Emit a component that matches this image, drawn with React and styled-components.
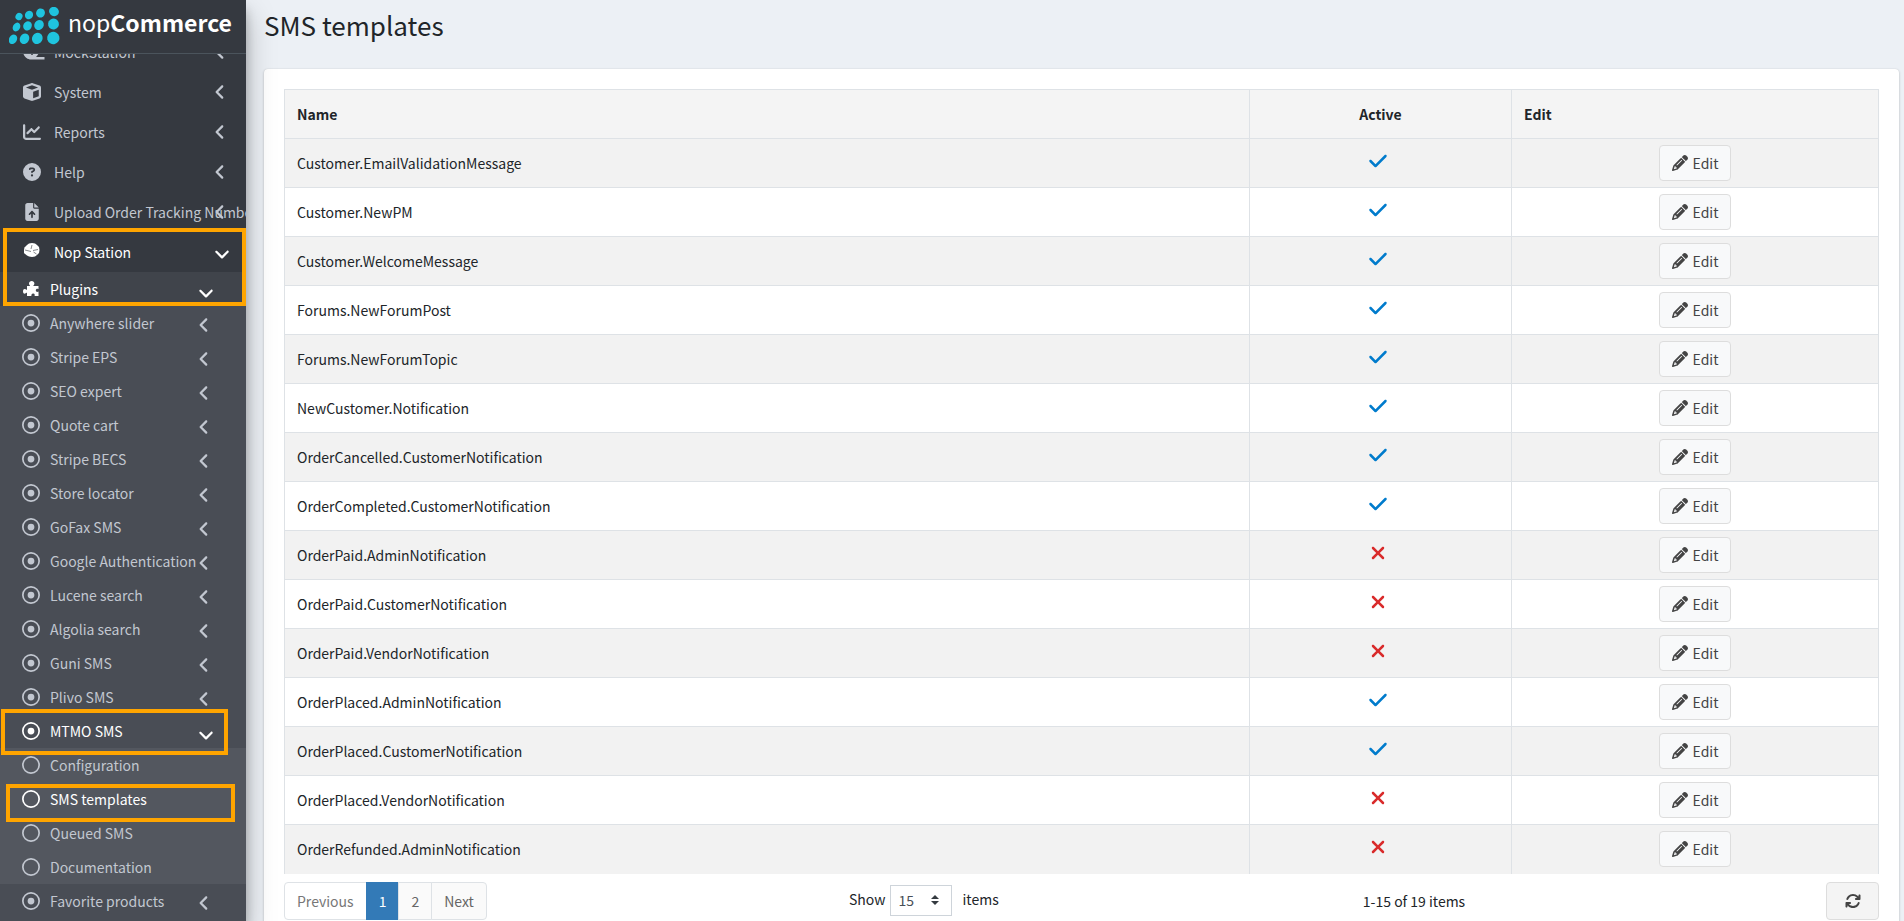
import React from "react";
import styled, { createGlobalStyle } from "styled-components";
import {
  FaAngleDown,
  FaAngleLeft,
  FaArrowsRotate,
  FaChartLine,
  FaCheck,
  FaCircleQuestion,
  FaCube,
  FaFileArrowUp,
  FaPencil,
  FaRegCircle,
  FaRegCircleDot,
  FaXmark,
} from "react-icons/fa6";

const GlobalStyle = createGlobalStyle`
  *, *::before, *::after {
    box-sizing: border-box;
  }

  body {
    margin: 0;
    color: #212529;
    background-color: #ecf0f5;
    font-family: "Noto Sans CJK SC", "Noto Sans", sans-serif;
    font-size: 14px;
    line-height: 24px;
  }

  button, select {
    font: inherit;
  }
`;

const Shell = styled.div`
  display: flex;
  height: 100vh;
  overflow: hidden;
`;

// Sidebar
const Sidebar = styled.aside`
  display: flex;
  flex-direction: column;
  flex: 0 0 246px;
  min-width: 0;
  color: #c2c7d0;
  background-color: #353940;
  box-shadow: 0 14px 28px rgba(0, 0, 0, 0.25), 0 10px 10px rgba(0, 0, 0, 0.22);
  z-index: 1;
`;

const Brand = styled.a`
  display: flex;
  align-items: center;
  flex: 0 0 54px;
  padding: 2px 9px 0;
  border-bottom: 1px solid #4b545c;
`;

const MenuViewport = styled.nav`
  flex: 1;
  min-height: 0;
  overflow: hidden;
`;

// The menu is scrolled a little, so the first entry is half hidden
const Menu = styled.ul`
  margin: -22px 0 0;
  padding: 0;
  list-style: none;
`;

const SubMenu = styled.ul`
  margin: 0;
  padding: 0 0 ${(props) => props.$tail || 0}px;
  list-style: none;
  background-color: ${(props) => props.$shade};
`;

const MenuEntry = styled.li`
  position: relative;
`;

const MenuLink = styled.a`
  display: flex;
  align-items: center;
  height: ${(props) => (props.$sub ? 34 : 40)}px;
  padding: ${(props) => (props.$sub ? "0 33px 0 22px" : "0 17px 0 23px")};
  color: ${(props) => (props.$active ? "#fff" : "#c2c7d0")};
  text-decoration: none;
  white-space: nowrap;
`;

const MenuIcon = styled.span`
  display: flex;
  justify-content: center;
  flex: 0 0 18px;
  margin-right: ${(props) => (props.$sub ? 10 : 13)}px;

  svg {
    width: ${(props) => props.$size || 18}px;
    height: ${(props) => props.$size || 18}px;
    overflow: visible;
  }
`;

const MenuText = styled.span`
  flex: 1;
  min-width: 0;
`;

const Arrow = styled.span`
  display: flex;
  justify-content: center;
  flex: 0 0 14px;
  padding-top: ${(props) => (props.$sub ? 4 : 0) + (props.$down ? 4 : 0)}px;
  margin-right: ${(props) => (props.$down ? -2 : 0)}px;
  font-size: 18px;

  svg {
    flex: none;
  }
`;

const Highlight = styled.span`
  position: absolute;
  top: ${(props) => props.$top}px;
  left: ${(props) => props.$left}px;
  width: ${(props) => props.$width}px;
  height: ${(props) => props.$height}px;
  border: 4px solid #ffa500;
  pointer-events: none;
  z-index: 1;
`;

// Main area
const Main = styled.main`
  flex: 1;
  min-width: 0;
  padding: 0 5px 0 18px;
`;

const Title = styled.h1`
  margin: 0;
  padding: 7px 0 26px;
  font-size: 26px;
  font-weight: 400;
  line-height: 36px;
`;

const Card = styled.section`
  padding: 20px;
  background-color: #fff;
  border-radius: 4px;
  box-shadow: 0 0 1px rgba(0, 0, 0, 0.125), 0 1px 3px rgba(0, 0, 0, 0.2);
`;

const Table = styled.table`
  width: 100%;
  border-collapse: collapse;
  table-layout: fixed;
`;

const HeadCell = styled.th`
  height: 49px;
  padding: 0 12px;
  border: 1px solid #dee2e6;
  background-color: #f4f4f4;
  font-weight: 700;
  text-align: ${(props) => props.$align || "left"};
`;

const Row = styled.tr`
  background-color: ${(props) => (props.$striped ? "#f2f2f2" : "#fff")};

  &:last-child td {
    border-bottom: 0;
  }
`;

const Cell = styled.td`
  height: 49px;
  padding: 0 12px;
  border: 1px solid #dee2e6;
  text-align: ${(props) => props.$align || "left"};
`;

const Status = styled.span`
  display: flex;
  justify-content: center;
  padding: 0 6px 4px 0;
  color: ${(props) => (props.$on ? "#007bcc" : "#d92b2b")};
  font-size: 20px;
`;

const EditButton = styled.button`
  display: inline-flex;
  align-items: center;
  gap: 5px;
  height: 36px;
  padding: 0 12px;
  color: #444;
  background-color: #f8f9fa;
  border: 1px solid #ddd;
  border-radius: 4px;
  vertical-align: middle;

  svg {
    font-size: 16px;
  }
`;

const Footer = styled.div`
  display: grid;
  grid-template-columns: 113fr 83fr 60fr 63fr;
  align-items: start;
  padding-top: 8px;
`;

const Pagination = styled.ul`
  display: flex;
  margin: 0;
  padding: 0;
  list-style: none;
`;

const PageButton = styled.button`
  height: 38px;
  padding: 0 12px;
  margin-left: -1px;
  color: ${(props) => (props.$current ? "#fff" : "#666")};
  background-color: ${(props) => (props.$current ? "#337ab7" : "#fafafa")};
  border: 1px solid ${(props) => (props.$current ? "#337ab7" : "#dee2e6")};

  li:first-child & {
    margin-left: 0;
    border-radius: 4px 0 0 4px;
  }

  li:last-child & {
    border-radius: 0 4px 4px 0;
  }

  &:disabled {
    color: #777;
    background-color: #fff;
  }
`;

const PageSize = styled.label`
  display: flex;
  align-items: flex-start;
  padding-top: 3px;
  line-height: 28px;
`;

const SizeSelect = styled.select`
  width: 62px;
  height: 31px;
  margin: 0 11px 0 4px;
  padding: 0 8px;
  color: #495057;
  border: 1px solid #ced4da;
  border-radius: 0;
  appearance: none;
  background: #fff
    url("data:image/svg+xml,%3Csvg xmlns='http://www.w3.org/2000/svg' viewBox='0 0 4 5'%3E%3Cpath fill='%23343a40' d='M2 0L0 2h4zm0 5L0 3h4z'/%3E%3C/svg%3E")
    no-repeat right 12px center / 8px 10px;
`;

const Summary = styled.div`
  padding-top: 7px;
  text-align: center;
`;

const RefreshButton = styled.button`
  display: flex;
  align-items: center;
  justify-content: center;
  justify-self: end;
  width: 53px;
  height: 38px;
  color: #444;
  background-color: #f4f4f4;
  border: 1px solid #ddd;
  border-radius: 4px;
  font-size: 16px;
`;

const logoDots = [
  [10, 9.5, 3.4, 3.8], [20, 8, 4, 4.4], [31.5, 6, 4.3, 4.7], [45, 4.5, 5, 4.6],
  [7.5, 20, 3.6, 4.6], [18.5, 18.8, 4.2, 4.8], [30, 18, 4.7, 5.2], [44.5, 17, 5.4, 5.4],
  [4, 32.3, 3.9, 5], [15.5, 31.8, 4.6, 5.4], [28.3, 31.4, 5.2, 5.8], [44.3, 31, 6.2, 6.2],
];

const Logo = () => (
  <svg width="228" height="42" viewBox="0 0 228 42" role="img" aria-label="nopCommerce">
    <g fill="#1fc4df">
      {logoDots.map(([cx, cy, rx, ry]) => (
        <ellipse key={`${cx}-${cy}`} cx={cx} cy={cy} rx={rx} ry={ry} transform={`rotate(30 ${cx} ${cy})`} />
      ))}
    </g>
    <text x="59" y="25" fill="#fff" fontFamily="Noto Sans CJK SC, Noto Sans, sans-serif" fontSize="23">
      nop
      <tspan fontWeight="700">Commerce</tspan>
    </text>
  </svg>
);

const MockIcon = () => (
  <svg viewBox="0 0 18 18" fill="currentColor" aria-hidden="true">
    <path d="M0 8a8 7 0 0 1 16 0c0 2-1 4-3 6h8.500v2.500H8C4 16.500 0 13 0 8z" />
    <circle cx="9" cy="11" r="1" fill="#353940" />
  </svg>
);

// Round mark of the plugin vendor
const StationIcon = () => (
  <svg viewBox="0 0 16 16" fill="currentColor" aria-hidden="true">
    <path d="M8 -1l3 .5 2 1.500 2 2 .5 3-.5 3-2 2-2 1.500-3 .5-3-.5-2-1-2.500-2L0 9 0 6l.5-2.500L3 1l2-1.500z" />
    <path d="M1 6l6 1.500M9 6.500l5-1M7 5l1-4M9.500 8l3 2" stroke="#353940" strokeWidth="0.6" fill="none" />
  </svg>
);

const PuzzleIcon = () => (
  <svg viewBox="0 0 16 16" fill="currentColor" aria-hidden="true">
    <path d="M4 5h3.200C6.500 4 6 3.300 6 2.500 6 1 7.200 0 8.700 0s2.700 1 2.700 2.500c0 .8-.5 1.500-1.200 2.500H15.500v3c-1-.7-2.700-.5-2.700 1.300s1.700 2 2.700 1.300V15h-4c.6-1 .3-2.500-1.300-2.500S8 14 8.500 15H4v-3.500c-1 .7-1.700 1.200-2.500 1.200C.5 12.700 0 11.500 0 10.300s.5-2.300 1.500-2.300c.8 0 1.500.4 2.500 1z" />
  </svg>
);

const topItems = [
  { text: "MockStation", icon: <MockIcon /> },
  { text: "System", icon: <FaCube /> },
  { text: "Reports", icon: <FaChartLine /> },
  { text: "Help", icon: <FaCircleQuestion /> },
  { text: "Upload Order Tracking Numbers", icon: <FaFileArrowUp /> },
];

const plugins = [
  "Anywhere slider",
  "Stripe EPS",
  "SEO expert",
  "Quote cart",
  "Stripe BECS",
  "Store locator",
  "GoFax SMS",
  "Google Authentication",
  "Lucene search",
  "Algolia search",
  "Guni SMS",
  "Plivo SMS",
];

const templates = [
  ["Customer.EmailValidationMessage", true],
  ["Customer.NewPM", true],
  ["Customer.WelcomeMessage", true],
  ["Forums.NewForumPost", true],
  ["Forums.NewForumTopic", true],
  ["NewCustomer.Notification", true],
  ["OrderCancelled.CustomerNotification", true],
  ["OrderCompleted.CustomerNotification", true],
  ["OrderPaid.AdminNotification", false],
  ["OrderPaid.CustomerNotification", false],
  ["OrderPaid.VendorNotification", false],
  ["OrderPlaced.AdminNotification", true],
  ["OrderPlaced.CustomerNotification", true],
  ["OrderPlaced.VendorNotification", false],
  ["OrderRefunded.AdminNotification", false],
];

const MenuItem = ({ text, icon, iconSize, sub, active, arrow = "left", highlight, children }) => (
  <MenuEntry>
    <MenuLink href="#" $sub={sub} $active={active}>
      <MenuIcon $sub={sub} $size={iconSize}>{icon}</MenuIcon>
      <MenuText>{text}</MenuText>
      {arrow !== "none" && (
        <Arrow $sub={sub} $down={arrow === "down"}>
          {arrow === "down" ? <FaAngleDown /> : <FaAngleLeft />}
        </Arrow>
      )}
    </MenuLink>
    {children}
    {highlight && (
      <Highlight $top={highlight[0]} $left={highlight[1]} $width={highlight[2]} $height={highlight[3]} />
    )}
  </MenuEntry>
);

const App = () => {
  return (
    <>
      <GlobalStyle />
      <Shell>
        <Sidebar>
          <Brand href="#">
            <Logo />
          </Brand>
          <MenuViewport>
            <Menu>
              {topItems.map((item) => (
                <MenuItem key={item.text} text={item.text} icon={item.icon} />
              ))}
              <MenuItem text="Nop Station" icon={<StationIcon />} iconSize={16} active arrow="down" highlight={[-4, 3, 243, 78]}>
                <SubMenu $shade="#40444b">
                  <MenuItem sub text="Plugins" icon={<PuzzleIcon />} iconSize={16} active arrow="down">
                    <SubMenu $shade="#494d55" $tail={10}>
                      {plugins.map((name) => (
                        <MenuItem key={name} sub text={name} icon={<FaRegCircleDot />} />
                      ))}
                      <MenuItem sub text="MTMO SMS" icon={<FaRegCircleDot />} active arrow="down" highlight={[-5, 1, 227, 46]}>
                        <SubMenu $shade="#53575f">
                          <MenuItem sub text="Configuration" icon={<FaRegCircle />} arrow="none" />
                          <MenuItem sub text="SMS templates" icon={<FaRegCircle />} active arrow="none" highlight={[2, 6, 229, 38]} />
                          <MenuItem sub text="Queued SMS" icon={<FaRegCircle />} arrow="none" />
                          <MenuItem sub text="Documentation" icon={<FaRegCircle />} arrow="none" />
                        </SubMenu>
                      </MenuItem>
                      <MenuItem sub text="Favorite products" icon={<FaRegCircleDot />} />
                    </SubMenu>
                  </MenuItem>
                </SubMenu>
              </MenuItem>
            </Menu>
          </MenuViewport>
        </Sidebar>

        <Main>
          <Title>SMS templates</Title>
          <Card>
            <Table>
              <colgroup>
                <col />
                <col width="262" />
                <col width="367" />
              </colgroup>
              <thead>
                <tr>
                  <HeadCell>Name</HeadCell>
                  <HeadCell $align="center">Active</HeadCell>
                  <HeadCell>Edit</HeadCell>
                </tr>
              </thead>
              <tbody>
                {templates.map(([name, active], index) => (
                  <Row key={name} $striped={index % 2 === 0}>
                    <Cell>{name}</Cell>
                    <Cell>
                      <Status $on={active}>{active ? <FaCheck /> : <FaXmark />}</Status>
                    </Cell>
                    <Cell $align="center">
                      <EditButton type="button">
                        <FaPencil /> Edit
                      </EditButton>
                    </Cell>
                  </Row>
                ))}
              </tbody>
            </Table>
            <Footer>
              <Pagination>
                <li><PageButton type="button" disabled>Previous</PageButton></li>
                <li><PageButton type="button" $current>1</PageButton></li>
                <li><PageButton type="button">2</PageButton></li>
                <li><PageButton type="button">Next</PageButton></li>
              </Pagination>
              <PageSize>
                Show
                <SizeSelect defaultValue="15">
                  <option>15</option>
                  <option>20</option>
                  <option>50</option>
                </SizeSelect>
                items
              </PageSize>
              <Summary>1-15 of 19 items</Summary>
              <RefreshButton type="button" aria-label="Refresh">
                <FaArrowsRotate />
              </RefreshButton>
            </Footer>
          </Card>
        </Main>
      </Shell>
    </>
  );
};

export default App;
